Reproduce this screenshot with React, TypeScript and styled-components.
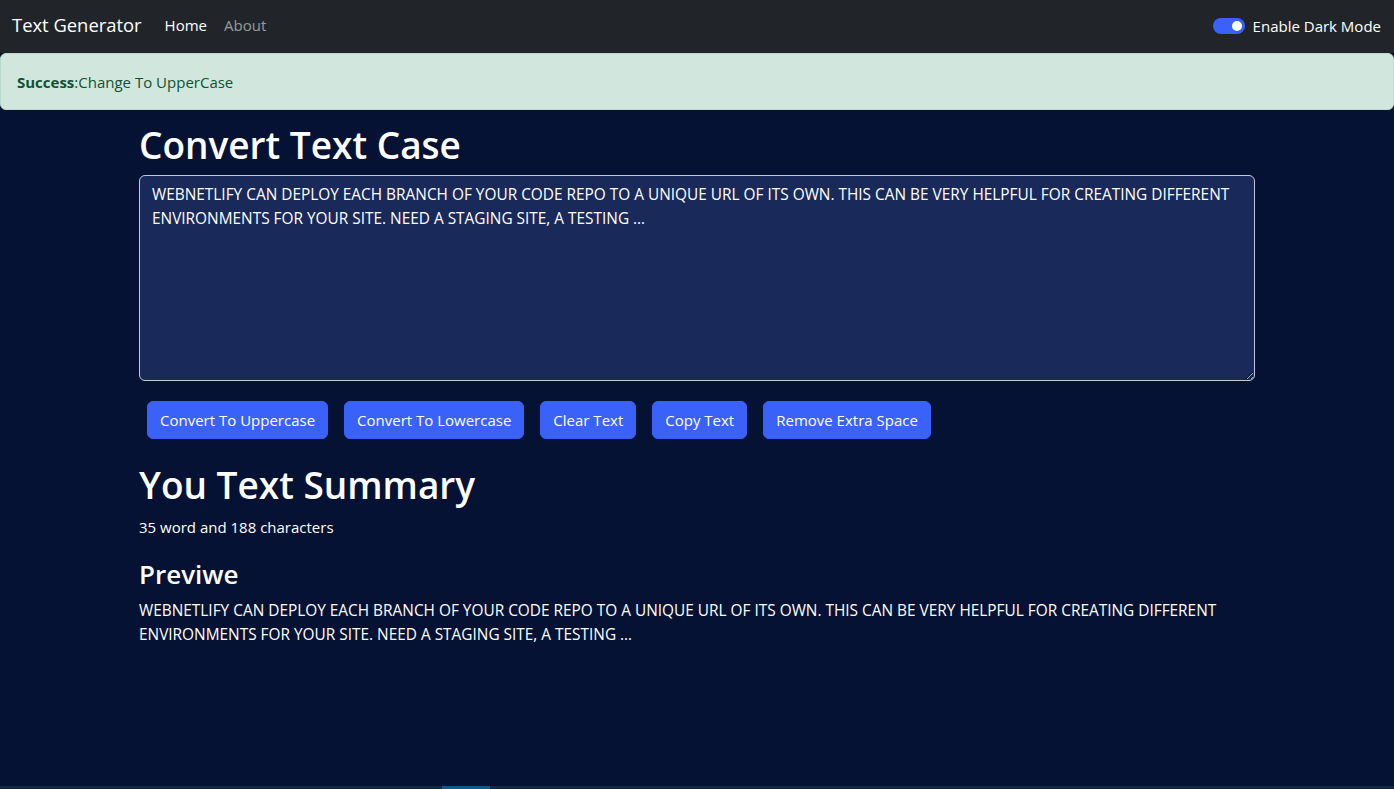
import React, { useState } from "react";
import styled, { createGlobalStyle } from "styled-components";

const GlobalStyle = createGlobalStyle`
  * { box-sizing: border-box; }
  body {
    margin: 0;
    font-family: "Open Sans", "Noto Sans", sans-serif;
    font-size: 15px;
    line-height: 1.6;
    background-color: #051233;
    color: #ffffff;
  }
`;

const Page = styled.div`
  min-height: 100vh;
  display: flex;
  flex-direction: column;
`;

const Navbar = styled.nav`
  height: 53px;
  background-color: #212529;
  display: flex;
  align-items: center;
  padding: 0 12px 3px;
`;

const Brand = styled.a`
  font-size: 18.4px;
  color: #ffffff;
  margin-right: 23px;
  text-decoration: none;
`;

const NavLinks = styled.div`
  display: flex;
  gap: 17px;
  flex: 1;
`;

const NavLink = styled.a<{ $active?: boolean }>`
  font-size: 15px;
  text-decoration: none;
  color: ${(p) => (p.$active ? "#ffffff" : "rgba(255,255,255,0.55)")};
`;

const SwitchWrap = styled.label`
  display: flex;
  align-items: center;
  gap: 8px;
  font-size: 15px;
  color: #ffffff;
  padding-right: 1px;
  margin-top: 1px;
`;

const SwitchTrack = styled.span<{ $on: boolean }>`
  width: 32px;
  height: 16px;
  border-radius: 8px;
  background-color: ${(p) => (p.$on ? "#3a62f8" : "#ffffff")};
  display: flex;
  align-items: center;
  justify-content: ${(p) => (p.$on ? "flex-end" : "flex-start")};
  padding: 0 3px;
`;

const SwitchKnob = styled.span`
  width: 10px;
  height: 10px;
  border-radius: 50%;
  background-color: #ffffff;
`;

const Alert = styled.div`
  height: 57px;
  background-color: #d1e7dd;
  border: 1px solid #badbcc;
  border-radius: 6px;
  color: #0f5132;
  padding: 0 16px;
  display: flex;
  align-items: center;
  font-size: 15px;

  strong {
    font-weight: 700;
  }
`;

const Main = styled.main`
  flex: 1;
`;

const Container = styled.div<{ $top: number }>`
  width: 1140px;
  margin: ${(p) => p.$top}px auto 16px;
  padding: 0 12px;
`;

const Heading = styled.h1`
  font-size: 37px;
  font-weight: 600;
  line-height: 48px;
  margin: 0 0 6px;
`;

const SubHeading = styled.h2`
  font-size: 26px;
  font-weight: 600;
  line-height: 38px;
  margin: 0 0 6px;
`;

const TextArea = styled.textarea`
  display: block;
  width: 100%;
  height: 206px;
  padding: 7px 12px 5px;
  font-family: inherit;
  font-size: 15.4px;
  line-height: 24px;
  color: #ffffff;
  background-color: #19295a;
  border: 1px solid #c3c9d6;
  border-radius: 6px;
  resize: vertical;
  outline: none;
  margin-bottom: 20px;
`;

const ButtonRow = styled.div`
  display: flex;
  gap: 16px;
  padding-left: 8px;
`;

const Button = styled.button`
  height: 38px;
  padding: 0 12px;
  font-family: inherit;
  font-size: 15px;
  color: #ffffff;
  background-color: #3a62f8;
  border: 1px solid #3a62f8;
  border-radius: 6px;
  cursor: pointer;
`;

const Text = styled.p<{ $mb?: number; $caps?: boolean }>`
  margin: 0 0 ${(p) => p.$mb ?? 16}px;
  font-size: ${(p) => (p.$caps ? "15.4px" : "15px")};
  line-height: 24px;
`;

const BottomStrip = styled.div`
  height: 3px;
  background-color: #0f2a45;
  display: flex;
  padding-left: 442px;
`;

const StripSegment = styled.span`
  width: 48px;
  background-color: #0b5a91;
`;

const sample =
  "WEBNETLIFY CAN DEPLOY EACH BRANCH OF YOUR CODE REPO TO A UNIQUE URL OF ITS OWN. THIS CAN BE VERY HELPFUL FOR CREATING DIFFERENT ENVIRONMENTS FOR YOUR SITE. NEED A STAGING SITE, A TESTING \u2026";

export default function App() {
  const [text, setText] = useState(sample);
  const [dark, setDark] = useState(true);

  const words = text.split(/\s+/).filter((w) => w.length > 0).length;

  return (
    <Page>
      <GlobalStyle />
      <Navbar>
        <Brand href="#">Text Generator</Brand>
        <NavLinks>
          <NavLink href="#" $active>
            Home
          </NavLink>
          <NavLink href="#">About</NavLink>
        </NavLinks>
        <SwitchWrap onClick={() => setDark(!dark)}>
          <SwitchTrack $on={dark}>
            <SwitchKnob />
          </SwitchTrack>
          Enable Dark Mode
        </SwitchWrap>
      </Navbar>
      <Alert>
        <strong>Success</strong>:Change To UpperCase
      </Alert>
      <Main>
        <Container $top={11}>
          <Heading>Convert Text Case</Heading>
          <TextArea value={text} onChange={(e) => setText(e.target.value)} />
          <ButtonRow>
            <Button onClick={() => setText(text.toUpperCase())}>Convert To Uppercase</Button>
            <Button onClick={() => setText(text.toLowerCase())}>Convert To Lowercase</Button>
            <Button onClick={() => setText("")}>Clear Text</Button>
            <Button>Copy Text</Button>
            <Button onClick={() => setText(text.split(/[ ]+/).join(" "))}>Remove Extra Space</Button>
          </ButtonRow>
        </Container>
        <Container $top={22}>
          <Heading>You Text Summary</Heading>
          <Text>
            {words} word and {text.length} characters
          </Text>
          <SubHeading>Previwe</SubHeading>
          <Text $caps>{text}</Text>
        </Container>
      </Main>
      <BottomStrip>
        <StripSegment />
      </BottomStrip>
    </Page>
  );
}
